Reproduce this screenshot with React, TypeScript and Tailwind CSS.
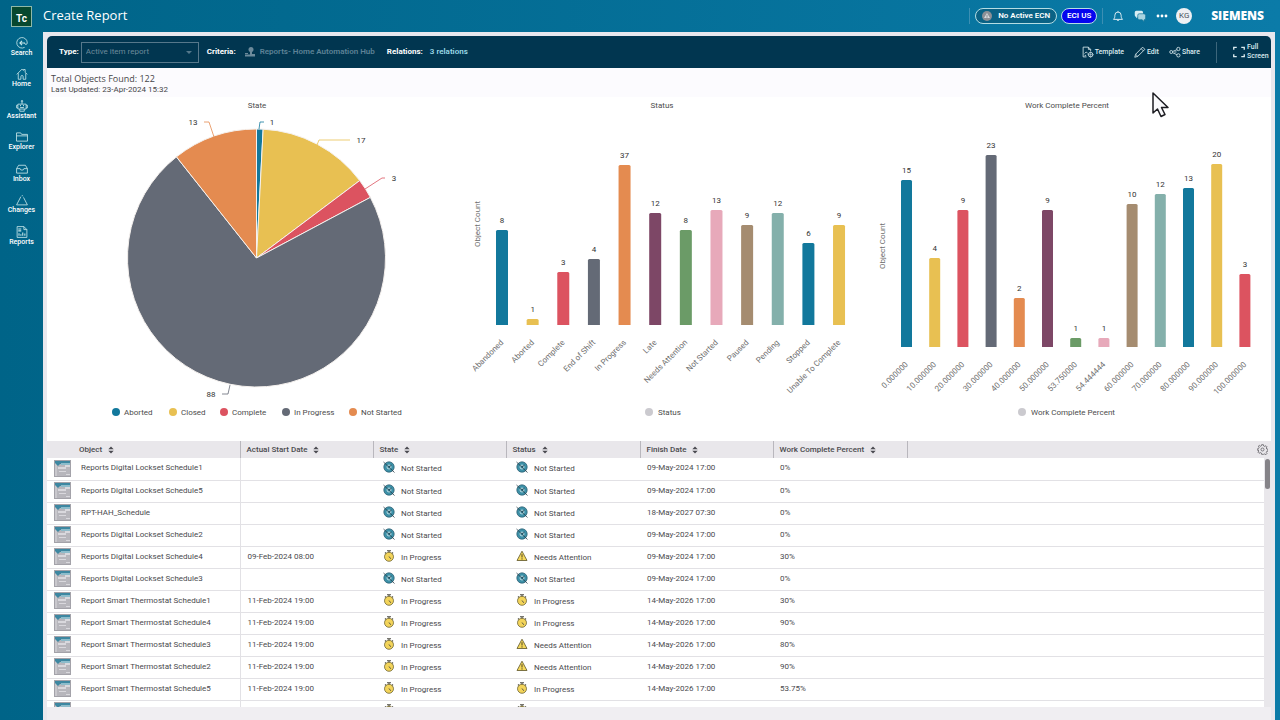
import type { ReactNode } from 'react';

const blue = '#12789c';
const yellow = '#e8c052';
const red = '#dc5360';
const slate = '#646a76';
const orange = '#e48b50';
const plum = '#7d4766';
const green = '#6b9b67';
const pink = '#e7a9ba';
const tan = '#a58c70';
const teal = '#84b0ab';

type Bar = { label: string; value: number; height: number; color: string };

const stateSlices = [
  { label: 'Aborted', value: 1, color: blue, line: '205,32 206,25 210,25', tx: 218, ty: 28, legendX: 62 },
  { label: 'Closed', value: 17, color: yellow, line: '263,48 265,43 296,43', tx: 307, ty: 46, legendX: 119 },
  { label: 'Complete', value: 3, color: red, line: '311,92 328,81 331,81', tx: 340, ty: 84, legendX: 170 },
  { label: 'In Progress', value: 88, color: slate, line: '176,288 174,297 168,297', tx: 157, ty: 300, legendX: 232 },
  { label: 'Not Started', value: 13, color: orange, line: '160,40 155,25 150,25', tx: 139, ty: 28, legendX: 299 },
];

const statusBars: Bar[] = [
  { label: 'Abandoned', value: 8, height: 95, color: blue },
  { label: 'Aborted', value: 1, height: 6, color: yellow },
  { label: 'Complete', value: 3, height: 53, color: red },
  { label: 'End of Shift', value: 4, height: 66, color: slate },
  { label: 'In Progress', value: 37, height: 160, color: orange },
  { label: 'Late', value: 12, height: 112, color: plum },
  { label: 'Needs Attention', value: 8, height: 95, color: green },
  { label: 'Not Started', value: 13, height: 115, color: pink },
  { label: 'Paused', value: 9, height: 100, color: tan },
  { label: 'Pending', value: 12, height: 112, color: teal },
  { label: 'Stopped', value: 6, height: 82, color: blue },
  { label: 'Unable To Complete', value: 9, height: 100, color: yellow },
];

const percentBars: Bar[] = [
  { label: '0.000000', value: 15, height: 167, color: blue },
  { label: '10.000000', value: 4, height: 89, color: yellow },
  { label: '20.000000', value: 9, height: 137, color: red },
  { label: '30.000000', value: 23, height: 192, color: slate },
  { label: '40.000000', value: 2, height: 49, color: orange },
  { label: '50.000000', value: 9, height: 137, color: plum },
  { label: '53.750000', value: 1, height: 9, color: green },
  { label: '54.444444', value: 1, height: 9, color: pink },
  { label: '60.000000', value: 10, height: 143, color: tan },
  { label: '70.000000', value: 12, height: 153, color: teal },
  { label: '80.000000', value: 13, height: 159, color: blue },
  { label: '90.000000', value: 20, height: 183, color: yellow },
  { label: '100.000000', value: 3, height: 73, color: red },
];

const rows = [
  ['Reports Digital Lockset Schedule1', '', 'Not Started', 'Not Started', '09-May-2024 17:00', '0%'],
  ['Reports Digital Lockset Schedule5', '', 'Not Started', 'Not Started', '09-May-2024 17:00', '0%'],
  ['RPT-HAH_Schedule', '', 'Not Started', 'Not Started', '18-May-2027 07:30', '0%'],
  ['Reports Digital Lockset Schedule2', '', 'Not Started', 'Not Started', '09-May-2024 17:00', '0%'],
  ['Reports Digital Lockset Schedule4', '09-Feb-2024 08:00', 'In Progress', 'Needs Attention', '09-May-2024 17:00', '30%'],
  ['Reports Digital Lockset Schedule3', '', 'Not Started', 'Not Started', '09-May-2024 17:00', '0%'],
  ['Report Smart Thermostat Schedule1', '11-Feb-2024 19:00', 'In Progress', 'In Progress', '14-May-2026 17:00', '30%'],
  ['Report Smart Thermostat Schedule4', '11-Feb-2024 19:00', 'In Progress', 'In Progress', '14-May-2026 17:00', '90%'],
  ['Report Smart Thermostat Schedule3', '11-Feb-2024 19:00', 'In Progress', 'Needs Attention', '14-May-2026 17:00', '80%'],
  ['Report Smart Thermostat Schedule2', '11-Feb-2024 19:00', 'In Progress', 'Needs Attention', '14-May-2026 17:00', '90%'],
  ['Report Smart Thermostat Schedule5', '11-Feb-2024 19:00', 'In Progress', 'In Progress', '14-May-2026 17:00', '53.75%'],
  ['', '', 'In Progress', 'In Progress', '', ''],
];

const columns = ['Object', 'Actual Start Date', 'State', 'Status', 'Finish Date', 'Work Complete Percent'];

const Icon = ({ children, className }: { children: ReactNode; className: string }) => (
  <svg viewBox="0 0 16 16" fill="none" stroke="currentColor" strokeWidth="1.1" className={className} aria-hidden="true">
    {children}
  </svg>
);

const navItems = [
  { label: 'Search', icon: <><path d="M11.500 13.800A7 7 0 1 1 15 8c0 2.600-3.500 2.600-3.500 0" /><path d="M12 8H5.500M8 5.200 5.200 8 8 10.800" strokeWidth="1.500" /></> },
  { label: 'Home', icon: <path d="M1 8.500 8 1.500l1.800 1.800V2h2.400v3.700L15 8.500M3 7v8h3.500v-3.500a1.500 1.500 0 0 1 3 0V15H13V7" /> },
  { label: 'Assistant', icon: <><path d="M2.500 5.500h11V12h-11zM8 5.500V2M5 15h6M5 12v3M11 12v3M2.500 7H.8v3.500h1.700M13.500 7h1.700v3.500h-1.700M5.500 10h5" /><circle cx="8" cy="1.500" r="1" /><path d="M5.300 7.500h1.200M9.500 7.500h1.200" strokeWidth="1.500" /></> },
  { label: 'Explorer', icon: <path d="M.7 13.500v-11h5.500L7.500 4.500h7.800v9zM.7 6.500h14.600" /> },
  { label: 'Inbox', icon: <path d="M.8 7.500 3.500 3h9l2.700 4.500v6H.8zM.8 7.500H5.500a2.500 2 0 0 0 5 0h4.700" /> },
  { label: 'Changes', icon: <path d="M10 4.500 15.200 14.500H.8L6.500 3.500M8 1.500l1 1.500" /> },
  { label: 'Reports', icon: <><path d="M1.500.8h9l4 4v10.400h-13zM10.500.8v4h4" /><path d="M4 13V9.500M6.500 13V11M9 13V8.500M11.800 13v-3M3 4h4M3 6.500h4" strokeWidth="1.400" /></> },
];

const StateIcon = ({ name }: { name: string }) => {
  if (name === 'Not Started') {
    return (
      <svg viewBox="0 0 12 12" className="size-3 shrink-0" aria-hidden="true">
        <circle cx="6" cy="6" r="5.200" fill="#3d91a8" stroke="#27586b" strokeWidth=".7" />
        <circle cx="6" cy="6" r="2" fill="none" stroke="#c9e3e8" strokeWidth=".9" />
        <path d="M.5 1l11 10.500M6 6l2.500-2" stroke="#243a46" strokeWidth=".8" />
      </svg>
    );
  }
  if (name === 'In Progress') {
    return (
      <svg viewBox="0 0 12 12" className="size-3 shrink-0" aria-hidden="true">
        <path d="M4 .8h4M6 1v2M2 2.500l1 1M10 2.500l-1 1" stroke="#4b4a42" strokeWidth="1.100" />
        <circle cx="6" cy="6.800" r="4.500" fill="#f3d45a" stroke="#6d6435" strokeWidth=".8" />
        <path d="M6 6.500 7.800 8.800" stroke="#4b4a42" strokeWidth=".9" />
      </svg>
    );
  }
  return (
    <svg viewBox="0 0 12 12" className="size-3 shrink-0" aria-hidden="true">
      <path d="M6 1.200 11 10.500H1z" fill="#f6d95b" stroke="#6d6435" strokeWidth=".9" strokeLinejoin="round" />
      <path d="M6 4.200v3.300M6 8.300v1.200" stroke="#4b4222" strokeWidth="1" />
    </svg>
  );
};

const ScheduleIcon = () => (
  <svg viewBox="0 0 17 17" className="block size-[17px]" aria-hidden="true">
    <path d="M0 0h17v17H0z" fill="#a3a2a9" />
    <path d="M1 3h2v13H1z" fill="#c9c8cd" />
    <path d="M3 4h13v12H3z" fill="#b7b6bc" />
    <path d="M1 1h15v3H6L4 6 1 3z" fill="#3d87a1" />
    <path d="M7 3h9v2H7z" fill="#8dbccb" />
    <path d="M4 7h8v2H4zM11 5h5v2h-5zM5 11h7v1H5zM12 14h4v1h-4z" fill="#d9d8dd" />
  </svg>
);

const SortIcon = () => (
  <svg viewBox="0 0 6 8" className="h-2 w-1.5" fill="#4a4a50" aria-hidden="true">
    <path d="M3 .5 5.700 3.300H.3zM3 7.500 5.700 4.700H.3z" />
  </svg>
);

const PieChart = () => {
  const cx = 202.5;
  const cy = 161;
  const r = 129;
  const total = stateSlices.reduce((sum, s) => sum + s.value, 0);
  let angle = 0;

  return (
    <svg viewBox="0 0 405 344" className="h-[344px] w-full" role="img" aria-label="State">
      <text x="203" y="11" textAnchor="middle" fontSize="8" fill="#4c4c4c">State</text>
      {stateSlices.map(s => {
        const start = angle;
        angle += (s.value / total) * Math.PI * 2;
        const x1 = cx + r * Math.sin(start);
        const y1 = cy - r * Math.cos(start);
        const x2 = cx + r * Math.sin(angle);
        const y2 = cy - r * Math.cos(angle);
        const large = angle - start > Math.PI ? 1 : 0;
        return (
          <g key={s.label}>
            <path d={`M${cx} ${cy}L${x1} ${y1}A${r} ${r} 0 ${large} 1 ${x2} ${y2}Z`} fill={s.color} stroke="#f5f1ee" strokeLinejoin="round" />
            <polyline points={s.line} fill="none" stroke={s.color} strokeWidth=".8" />
            <text x={s.tx} y={s.ty} textAnchor="middle" fontSize="8" fill="#333">{s.value}</text>
            <circle cx={s.legendX} cy="315" r="4" fill={s.color} />
            <text x={s.legendX + 8} y="318" fontSize="8" fill="#4c4c4c">{s.label}</text>
          </g>
        );
      })}
    </svg>
  );
};

interface BarChartProps {
  title: string;
  bars: Bar[];
  first: number;
  step: number;
  width: number;
  base: number;
  legendX: number;
}

const BarChart = ({ title, bars, first, step, width, base, legendX }: BarChartProps) => (
  <svg viewBox="0 0 405 344" className="h-[344px] w-full" role="img" aria-label={title}>
    <text x="203" y="11" textAnchor="middle" fontSize="8" fill="#4c4c4c">{title}</text>
    <text transform={`translate(21 ${base - 101}) rotate(-90)`} textAnchor="middle" fontSize="8" fill="#6e6e6e">Object Count</text>
    {bars.map((bar, i) => {
      const x = first + i * step;
      const top = base - bar.height;
      const left = x - width / 2;
      return (
        <g key={bar.label}>
          <path d={`M${left} ${base}V${top + 1.5}q0-1.500 1.500-1.500h${width - 3}q1.500 0 1.500 1.500V${base}Z`} fill={bar.color} />
          <text x={x} y={top - 7} textAnchor="middle" fontSize="8" fill="#333">{bar.value}</text>
          <text transform={`translate(${x + 2} ${base + 18}) rotate(-45)`} textAnchor="end" fontSize="8" fill="#6e6e6e">{bar.label}</text>
        </g>
      );
    })}
    <circle cx={legendX} cy="315" r="4" fill="#cbcacf" />
    <text x={legendX + 9} y="318" fontSize="8" fill="#4c4c4c">{title}</text>
  </svg>
);

const TopBar = () => (
  <header className="flex h-8 shrink-0 items-center pr-4 text-white">
    <div className="ml-[11px] flex h-[21px] w-[21px] items-center justify-center border border-[#8fb9a8] bg-[#07482f] pt-1 text-[10px] font-bold">
      Tc
    </div>
    <h1 className="ml-[11px] font-['Open_Sans',sans-serif] text-[13px]">Create Report</h1>
    <div className="ml-auto flex items-center text-[8px]">
      <span className="mr-[5px] h-4 w-px bg-[#3c8fb3]" />
      <button type="button" className="flex h-4 w-[82px] items-center justify-center gap-1.5 rounded-full border border-[#b5dde3] bg-[#0a6285] font-semibold">
        <svg viewBox="0 0 10 10" className="size-[10px]" aria-hidden="true">
          <circle cx="5" cy="5" r="5" fill="#8b8f96" />
          <path d="M5 2 8 7H2z" fill="#d6d8db" />
          <path d="M5 3.800v3" stroke="#8b8f96" />
        </svg>
        No Active ECN
      </button>
      <button type="button" className="ml-1 h-4 w-9 rounded-full border border-[#b5dde3] bg-[#0505ee] font-semibold">ECI US</button>
      <span className="mx-[5px] h-4 w-px bg-[#3c8fb3]" />
      <button type="button" aria-label="Notifications" className="ml-1">
        <Icon className="size-3">
          <path d="M8 1.200v1.300M2 12.500c1.800-2 1.800-3.500 1.800-5.500a4.200 4.200 0 0 1 8.400 0c0 2 0 3.500 1.800 5.500zM6.500 13a1.600 1.600 0 0 0 3 0" />
        </Icon>
      </button>
      <button type="button" aria-label="Messages" className="ml-2.5">
        <svg viewBox="0 0 16 16" className="size-3" aria-hidden="true">
          <path d="M3 1h7q2 0 2 2v4q0 2-2 2H6L3 11V9Q1 9 1 7V3q0-2 2-2z" fill="#d9edf3" />
          <path d="M7 5h6q2.500 0 2.500 2v4q0 2-2 2v2.500L11 13H7q-2 0-2-2V7q0-2 2-2z" fill="#a7d3e0" stroke="#0c7197" strokeWidth=".9" />
        </svg>
      </button>
      <button type="button" aria-label="More" className="ml-2.5">
        <svg viewBox="0 0 12 4" className="h-1 w-3" fill="#fff" aria-hidden="true">
          <circle cx="2" cy="2" r="1.400" /><circle cx="6" cy="2" r="1.400" /><circle cx="10" cy="2" r="1.400" />
        </svg>
      </button>
      <button type="button" className="ml-2 size-4 rounded-full bg-[#eef0f3] text-[8px] text-[#47505a]">KG</button>
      <span className="ml-[19px] font-['Open_Sans',sans-serif] text-[12px] font-extrabold">SIEMENS</span>
    </div>
  </header>
);

const SideNav = () => (
  <nav className="grid h-[225px] w-[43px] shrink-0 pt-[5px] text-[7px] leading-[9px] font-medium text-white">
    {navItems.map(item => (
      <a key={item.label} href="#" className="flex flex-col items-center">
        <Icon className="size-3 text-[#c9e8ea]">{item.icon}</Icon>
        {item.label}
      </a>
    ))}
  </nav>
);

const CommandBar = () => (
  <div className="flex h-8 shrink-0 items-center rounded-t-[5px] bg-[#013650] pr-1 pl-3 text-[8px] text-[#dcebef]">
    <label htmlFor="type" className="font-bold text-white">Type:</label>
    <div className="relative ml-0.5">
      <select id="type" disabled className="block h-[21px] w-[118px] appearance-none border border-[#56788b] pl-1 text-[8px] text-[#6c8a9b]">
        <option>Active item report</option>
      </select>
      <svg viewBox="0 0 6 4" className="absolute top-[9px] right-[7px] h-1 w-1.5" fill="#54788b" aria-hidden="true"><path d="M0 0h6L3 3z" /></svg>
    </div>
    <span className="ml-2 font-bold text-white">Criteria:</span>
    <svg viewBox="0 0 12 12" className="ml-2 size-3" fill="#6c8a9b" aria-hidden="true">
      <circle cx="7" cy="3.500" r="2.500" />
      <path d="M6 5h2v3h3v2.500H1V8.500h5zM1 7h3v1H1z" />
    </svg>
    <span className="ml-1 font-semibold text-[#5d8296]">Reports- Home Automation Hub</span>
    <span className="ml-3 font-bold text-white">Relations:</span>
    <a href="#" className="ml-[7px] font-semibold text-[#9ddbe8]">3 relations</a>
    <div className="ml-auto flex items-center text-[7px] font-medium">
      <button type="button" className="flex items-center gap-px">
        <Icon className="size-3">
          <path d="M6 14.500H1.500v-13h7l3 3V7M8.500 1.500v3h3M3.500 10l2-2 2 1.500M3.500 12.500h2" />
          <circle cx="11.500" cy="11.500" r="3" /><path d="M11.500 7.500v8M7.500 11.500h8" strokeWidth=".7" />
        </Icon>
        Template
      </button>
      <button type="button" className="ml-2.5 flex items-center gap-px">
        <Icon className="size-3"><path d="M1 15l1.200-4L11.500 1.500l3 3L5 13.800zM9.500 3.500l3 3M2.200 11 5 13.800" /></Icon>
        Edit
      </button>
      <button type="button" className="ml-2.5 flex items-center gap-px">
        <Icon className="size-3">
          <circle cx="3" cy="8" r="2" /><circle cx="12.500" cy="4" r="2.200" /><circle cx="12.500" cy="12.500" r="2.200" />
          <path d="M5 7.200 10.500 5M5 9l5.500 2.500M7 8h3" />
        </Icon>
        Share
      </button>
      <span className="mx-4 h-[21px] w-px bg-[#3d667b]" />
      <button type="button" className="flex items-center gap-0.5 text-left leading-[9px]">
        <Icon className="size-3"><path d="M1 5V1.800h4M11 1.800h4V5M15 11v3.200h-4M5 14.200H1V11" strokeWidth="1.800" /></Icon>
        <span className="w-5">Full Screen</span>
      </button>
    </div>
  </div>
);

const ObjectTable = () => (
  <section className="relative flex min-h-0 flex-1 overflow-hidden bg-white">
    <table className="h-0 flex-1 table-fixed border-collapse text-left text-[8px] text-[#4a4a4e]">
      <colgroup>
        <col className="w-[193px]" />
        <col className="w-[133px]" />
        <col className="w-[133px]" />
        <col className="w-[134px]" />
        <col className="w-[133px]" />
        <col className="w-[134px]" />
        <col />
      </colgroup>
      <thead>
        <tr className="h-[17px] bg-[#e9e7eb]">
          {columns.map((name, i) => (
            <th key={name} className={`border-r border-[#b9b7bd] p-0 font-medium ${i === 0 ? 'pl-8' : 'pl-1.5'}`}>
              <button type="button" className="flex items-center gap-1.5">
                {name}
                <SortIcon />
              </button>
            </th>
          ))}
          <th className="p-0" />
        </tr>
      </thead>
      <tbody>
        {rows.map((row, i) => (
          <tr key={i} className="h-[22px] border-b border-[#e2e1e5]">
            <td className="border-r border-[#e2e1e5] p-0 pb-px pl-[7px]">
              <div className="flex items-center gap-2.5"><ScheduleIcon />{row[0]}</div>
            </td>
            <td className="p-0 pb-px pl-[7px]">{row[1]}</td>
            {[row[2], row[3]].map((state, j) => (
              <td key={j} className="p-0 pb-px pl-2.5">
                <div className="flex items-end gap-1.5 leading-3">
                  <span className="pb-0.5"><StateIcon name={state} /></span>
                  {row[0] && state}
                </div>
              </td>
            ))}
            <td className="p-0 pb-px pl-[7px]">{row[4]}</td>
            <td className="p-0 pb-px pl-[7px]">{row[5]}</td>
            <td className="p-0" />
          </tr>
        ))}
      </tbody>
    </table>
    <div className="w-[7px] shrink-0 bg-[#e9e7eb] px-px pt-[18px]">
      <div className="h-[30px] rounded-full bg-[#858388]" />
    </div>
    <button type="button" aria-label="Table settings" className="absolute top-[3px] right-[3px] text-[#6d6b70]">
      <svg viewBox="0 0 16 16" className="size-[11px]" fill="none" stroke="currentColor" strokeWidth="1.300" aria-hidden="true">
        <path d="M6.700 1h2.600l.4 1.900 1.600.7 1.700-1.100 1.500 1.500-1 1.700.7 1.600 1.800.4v2.600l-1.800.4-.7 1.600 1 1.700-1.500 1.500-1.700-1.100-1.600.7L9.300 15H6.700l-.4-1.900-1.600-.7L3 13.500 1.500 12l1-1.700-.7-1.600L1 9.300V6.700l1.500-.4.7-1.600-1.200-1.700L3.500 2 5 3.300l1.300-.6z" />
        <circle cx="8" cy="8" r="2.200" />
      </svg>
    </button>
  </section>
);

const App = () => {
  return (
    <div className="relative flex h-screen flex-col overflow-hidden bg-linear-to-r from-[#006488] to-[#0b7ba8] font-['Roboto','Open_Sans',sans-serif]">
      <TopBar />
      <div className="flex min-h-0 flex-1">
        <SideNav />
        <main className="mr-[5px] flex min-w-0 flex-1 flex-col bg-[#e8e8ee] px-1 pt-1">
          <CommandBar />
          <div className="h-[29px] shrink-0 bg-[#fcfbfe] pt-1 pl-1 text-[#464649]">
            <p className="font-['Open_Sans',sans-serif] text-[9px] leading-[13px]">Total Objects Found: 122</p>
            <p className="text-[8px] leading-[10px]">Last Updated: 23-Apr-2024 15:32</p>
          </div>
          <div className="grid shrink-0 grid-cols-3 bg-white pr-0.5 pl-[7px]">
            <PieChart />
            <BarChart title="Status" bars={statusBars} first={43} step={30.64} width={12} base={228} legendX={190} />
            <BarChart title="Work Complete Percent" bars={percentBars} first={42.5} step={28.2} width={11} base={250} legendX={158} />
          </div>
          <ObjectTable />
          <div className="h-[13px] shrink-0 bg-[#f0eef2]" />
        </main>
      </div>
      <svg viewBox="0 0 18 28" className="pointer-events-none absolute top-[91px] left-[1151px] h-7 w-[18px]" aria-hidden="true">
        <path d="M2 2v20l4.500-4 3.500 7.500 4-2-3.500-7H17z" fill="#fafafc" stroke="#1d1d22" strokeWidth="1.500" strokeLinejoin="round" />
      </svg>
    </div>
  );
};

export default App;
